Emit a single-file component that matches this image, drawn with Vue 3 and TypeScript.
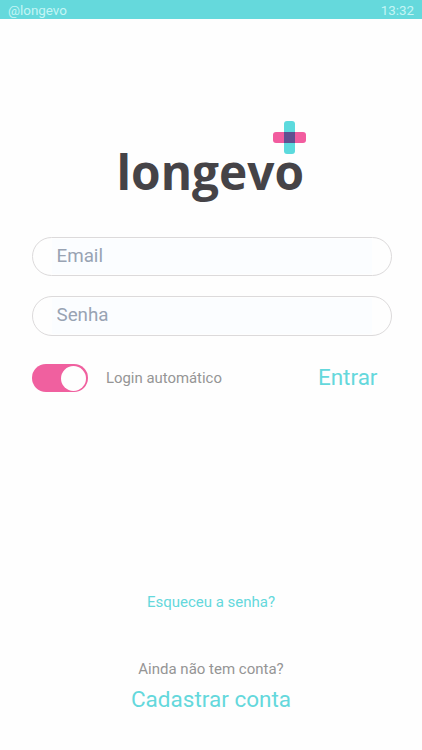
<script setup lang="ts">
import { ref } from 'vue'

const email = ref('')
const password = ref('')
const autoLogin = ref(true)
</script>

<template>
  <div class="screen">
    <header class="status">
      <span>@longevo</span>
      <span>13:32</span>
    </header>
    <main class="content">
      <svg class="logo" width="200" height="90" viewBox="0 0 200 90" role="img" aria-label="longevo">
        <text class="wordmark" x="5.5" y="69.5" textLength="187.5" lengthAdjust="spacingAndGlyphs">longevo</text>
        <rect x="173" y="1" width="11" height="33" rx="3" fill="#5cdadd" />
        <rect x="162" y="12" width="33" height="11" rx="3" fill="#f25c9f" />
        <rect x="173" y="12" width="11" height="11" fill="#604f90" />
      </svg>
      <form class="form" @submit.prevent>
        <label class="field"><input v-model="email" type="email" placeholder="Email" /></label>
        <label class="field"><input v-model="password" type="password" placeholder="Senha" /></label>
        <div class="actions">
          <button type="button" class="switch" :class="{ on: autoLogin }" role="switch" :aria-checked="autoLogin" @click="autoLogin = !autoLogin">
            <span class="knob"></span>
          </button>
          <span class="auto">Login automático</span>
          <button type="submit" class="enter">Entrar</button>
        </div>
      </form>
      <footer class="footer">
        <a class="forgot">Esqueceu a senha?</a>
        <span class="question">Ainda não tem conta?</span>
        <a class="register">Cadastrar conta</a>
      </footer>
    </main>
  </div>
</template>

<style>
body {
  background: #fefefe;
}
</style>

<style scoped>
.screen {
  display: flex;
  flex-direction: column;
  height: 750px;
  box-sizing: border-box;
  overflow: hidden;
  font-family: Roboto, sans-serif;
  color: #959595;
}
.status {
  display: flex;
  justify-content: space-between;
  height: 19px;
  box-sizing: border-box;
  padding: 3px 8px 0;
  background: #65d9dc;
  color: #c4f5f5;
  font-size: 13.4px;
  line-height: 16px;
}
.content {
  flex: 1;
  display: flex;
  flex-direction: column;
  padding: 101px 30px 36px 32px;
}
.logo {
  display: block;
  margin-left: 79px;
}
.wordmark {
  font: 700 48px 'Open Sans', sans-serif;
  fill: #454347;
}
.form {
  display: flex;
  flex-direction: column;
  gap: 20px;
  margin-top: 27px;
}
.field {
  display: flex;
  height: 39px;
  box-sizing: border-box;
  padding: 1px 19px;
  border: 1px solid #dcdadb;
  border-radius: 20px;
  background: #fefefe;
}
.field + .field {
  height: 40px;
}
input {
  flex: 1;
  min-width: 0;
  padding: 0 5px 2px 4.5px;
  border: 0;
  outline: 0;
  background: #fbfdff;
  font: 18.8px Roboto, sans-serif;
  color: #98a3b3;
}
input::placeholder {
  color: #98a3b3;
  opacity: 1;
}
button {
  padding: 0;
  border: 0;
  background: none;
  font-family: inherit;
}
.actions {
  display: flex;
  align-items: center;
  height: 28px;
  margin-top: 8px;
}
.switch {
  display: flex;
  align-items: center;
  width: 56px;
  height: 28px;
  padding: 0 2px;
  border-radius: 14px;
  background: #ccc;
}
.switch.on {
  justify-content: flex-end;
  background: #f0609f;
}
.knob {
  width: 25px;
  height: 25px;
  border-radius: 50%;
  background: #fefefe;
}
.auto {
  margin-left: 18px;
  font-size: 14.9px;
}
.enter {
  margin: 0 14.5px 2px auto;
  font-size: 22.5px;
  color: #64d8dc;
}
.footer {
  display: flex;
  flex-direction: column;
  align-items: center;
  margin: auto 2px 0 0;
  color: #959595;
}
.forgot,
.question {
  font-size: 15px;
  line-height: 20px;
}
.forgot,
.register {
  color: #64d8dc;
}
.question {
  margin-top: 47px;
}
.register {
  margin-top: 5px;
  font-size: 22.5px;
  line-height: 30px;
}
</style>
